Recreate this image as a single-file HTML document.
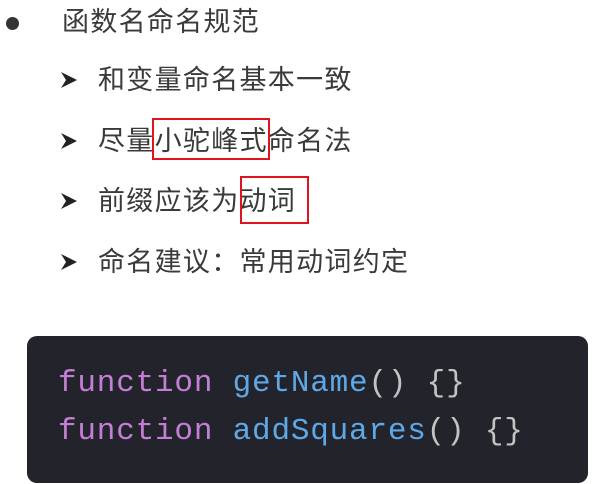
<!DOCTYPE html>
<html><head><meta charset="utf-8"><style>
body{margin:0;width:594px;height:484px;background:#fff;position:relative;overflow:hidden;font-family:"Liberation Sans","Noto Sans CJK SC",sans-serif;color:#3a3a3a}
.t{position:absolute;font-size:27px;line-height:30px;white-space:nowrap;letter-spacing:1.3px}
.dot{position:absolute;left:6px;top:17px;width:13px;height:13px;border-radius:50%;background:#333}
.arr{position:absolute;left:60px;width:18px;height:18px}
.box{position:absolute;border:2px solid #e0141e}
.code{position:absolute;left:27px;top:336px;width:561px;height:147px;background:#23232b;border-radius:10px}
.c{position:absolute;left:58px;font-family:"Liberation Mono",monospace;font-size:31px;line-height:36px;color:#c3c3c3;white-space:nowrap;letter-spacing:0.8px}
.k{color:#c47fd5}.f{color:#5fa8e6}
</style></head><body>
<div class="dot"></div>
<div class="t" style="left:62px;top:7px">函数名命名规范</div>
<svg class="arr" style="top:71px" viewBox="0 0 18 18"><path d="M1 1 L17 9 L1 17 L6 9 Z" fill="#222"/></svg>
<div class="t" style="left:98px;top:65px">和变量命名基本一致</div>
<svg class="arr" style="top:132px" viewBox="0 0 18 18"><path d="M1 1 L17 9 L1 17 L6 9 Z" fill="#222"/></svg>
<div class="t" style="left:98px;top:126px">尽量小驼峰式命名法</div>
<svg class="arr" style="top:192px" viewBox="0 0 18 18"><path d="M1 1 L17 9 L1 17 L6 9 Z" fill="#222"/></svg>
<div class="t" style="left:98px;top:186px">前缀应该为动词</div>
<svg class="arr" style="top:253px" viewBox="0 0 18 18"><path d="M1 1 L17 9 L1 17 L6 9 Z" fill="#222"/></svg>
<div class="t" style="left:98px;top:247px">命名建议：常用动词约定</div>
<div class="box" style="left:152px;top:118px;width:114px;height:38px"></div>
<div class="box" style="left:240px;top:176px;width:65px;height:44px"></div>
<div class="code"></div>
<div class="c" style="top:366px"><span class="k">function</span> <span class="f">getName</span>() {}</div>
<div class="c" style="top:414px"><span class="k">function</span> <span class="f">addSquares</span>() {}</div>
</body></html>
